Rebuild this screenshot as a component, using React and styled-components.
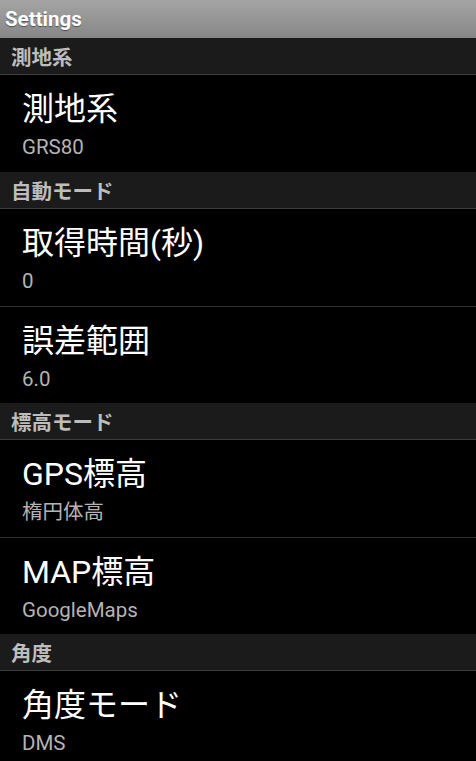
import React from 'react'
import { styled, createGlobalStyle } from 'styled-components'

const GlobalStyle = createGlobalStyle`
  html, body {
    margin: 0;
    padding: 0;
    background: #000;
  }
  body {
    font-family: Roboto, "Noto Sans CJK JP", sans-serif;
  }
`

const SECTIONS = [
  { title: '測地系', items: [{ title: '測地系', summary: 'GRS80' }] },
  {
    title: '自動モード',
    items: [
      { title: '取得時間(秒)', summary: '0' },
      { title: '誤差範囲', summary: '6.0' },
    ],
  },
  {
    title: '標高モード',
    items: [
      { title: 'GPS標高', summary: '楕円体高' },
      { title: 'MAP標高', summary: 'GoogleMaps' },
    ],
  },
  { title: '角度', items: [{ title: '角度モード', summary: 'DMS' }] },
]

const Screen = styled.div`
  width: 476px;
  height: 761px;
  overflow: hidden;
  background: #000;
  display: flex;
  flex-direction: column;
`

const TitleBar = styled.div`
  height: 38px;
  flex-shrink: 0;
  display: flex;
  align-items: center;
  padding-left: 5px;
  background: linear-gradient(#a4a4a4, #878787);
  color: #fff;
  font-size: 20.5px;
  font-weight: bold;
  text-shadow: 0 1px 1px rgba(0, 0, 0, 0.45);
`

const Category = styled.div`
  height: 36px;
  flex-shrink: 0;
  display: flex;
  align-items: center;
  padding-left: 11px;
  background: #1b1b1b;
  border-bottom: 1px solid #3c3c3c;
  color: #bdbdbd;
  font-size: 20.5px;
  font-weight: bold;
`

const Item = styled.div`
  height: 97px;
  flex-shrink: 0;
  box-sizing: border-box;
  padding: 15px 22px 0;
  display: flex;
  flex-direction: column;
  border-top: ${(p) => (p.$divided ? '1px solid #2e2e2e' : 'none')};
`

const ItemTitle = styled.div`
  color: #fff;
  font-size: 32px;
  line-height: 38px;
`

const Summary = styled.div`
  margin-top: 6px;
  color: #b4b4b4;
  font-size: 20.5px;
  line-height: 26px;
`

const App = () => {
  return (
    <Screen>
      <GlobalStyle />
      <TitleBar>Settings</TitleBar>
      {SECTIONS.map((section) => (
        <React.Fragment key={section.title}>
          <Category>{section.title}</Category>
          {section.items.map((item, i) => (
            <Item key={item.title} $divided={i > 0}>
              <ItemTitle>{item.title}</ItemTitle>
              <Summary>{item.summary}</Summary>
            </Item>
          ))}
        </React.Fragment>
      ))}
    </Screen>
  )
}

export default App
